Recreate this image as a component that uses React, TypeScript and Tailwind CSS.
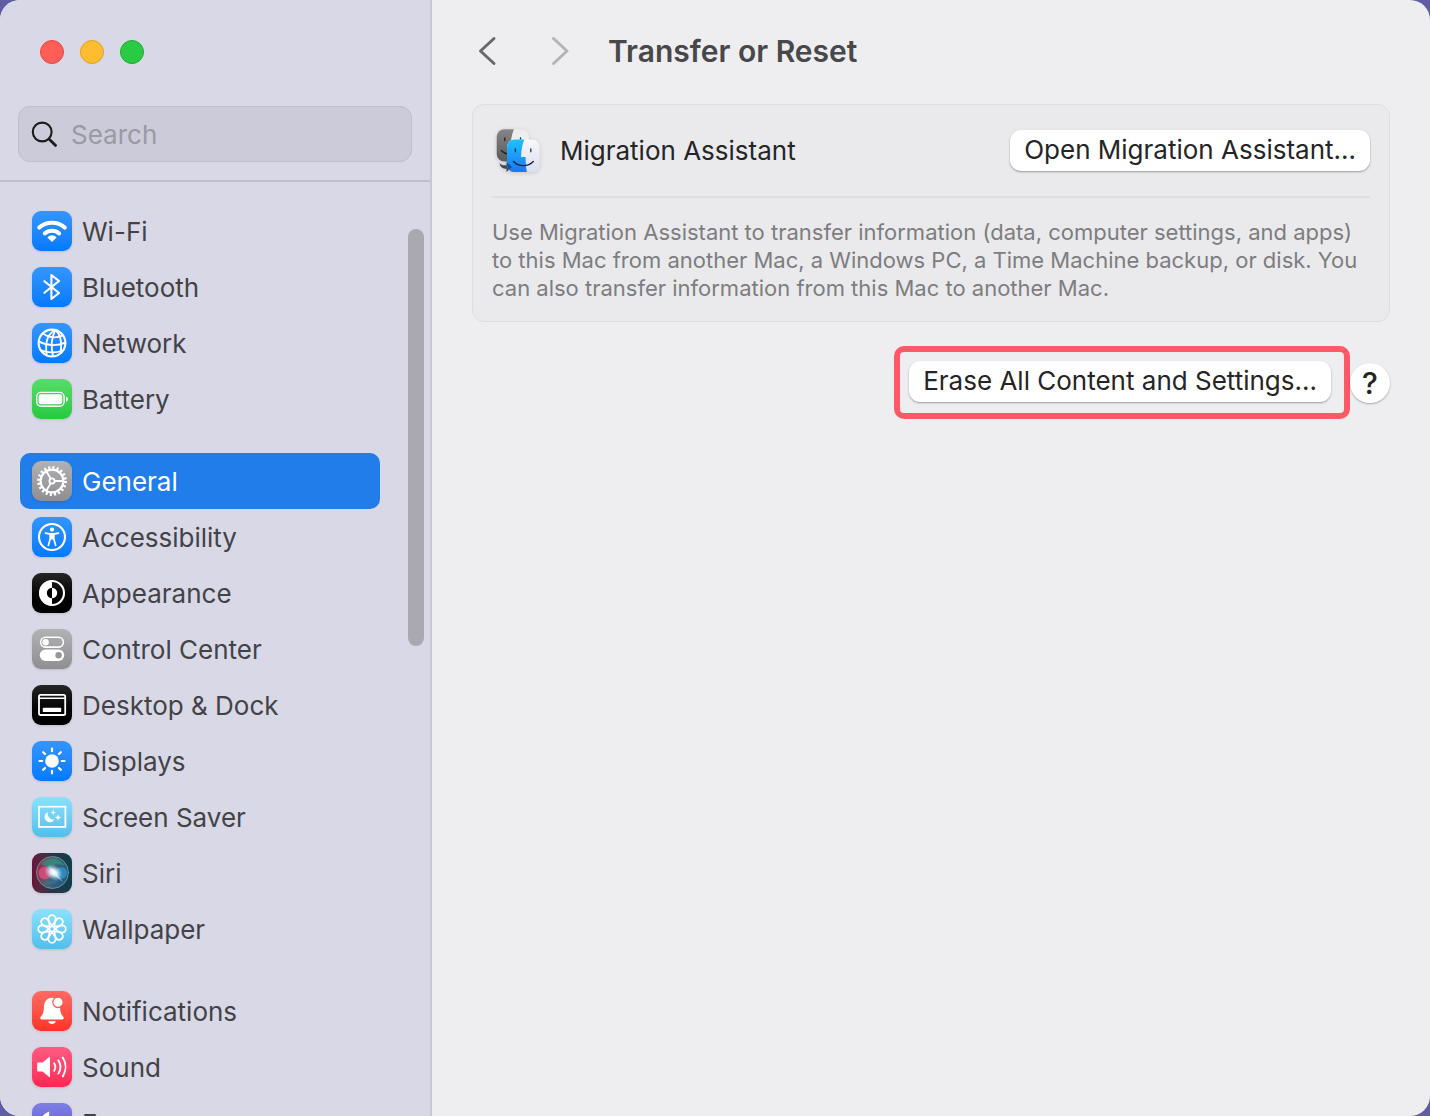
import React, { useState } from 'react';

interface SettingsItem {
  name: string;
  tile: string;
  glyph: React.ReactNode;
}

const BLUE = 'bg-linear-to-b from-[#3395ff] to-[#007aff]';
const SKY = 'bg-linear-to-b from-[#8ae2fb] to-[#52bdee]';
const GRAY = 'bg-linear-to-b from-[#b2b2b4] to-[#8e8e93]';
const BLACK = 'bg-linear-to-b from-[#262626] to-[#000000]';

const RAYS = [0, 45, 90, 135, 180, 225, 270, 315];

const WifiGlyph = () => (
  <>
    <path d="M7.2 16.6a19 19 0 0 1 25.600 0" strokeWidth="4" />
    <path d="M12.8 22.400a10.800 10.800 0 0 1 14.400 0" strokeWidth="4" />
    <path d="M15.4 26.400a6.200 6.200 0 0 1 9.200 0L20 31z" fill="white" stroke="none" />
  </>
);

const BluetoothGlyph = () => (
  <path d="M12.4 14.2 27 26l-7.6 6V8l7.6 6-14.6 11.8" strokeWidth="2.1" />
);

const NetworkGlyph = () => (
  <g strokeWidth="1.8">
    <circle cx="20" cy="20" r="13.4" strokeWidth="2.1" />
    <path d="M23.4 7C17 10 12.5 18 14.8 32.4" />
    <path d="M23.4 7C20 13 18.8 23 21 33.2" />
    <path d="M23.4 7C28.5 11 30 20 28.6 30" />
    <path d="M10.8 10.4C16 14.8 24 15.6 31 12.4" />
    <path d="M6.8 18.4C14 22.6 25 23.4 33.2 19.6" />
    <path d="M9.2 27.4C15 30 24 30.4 31 27.2" />
  </g>
);

const BatteryGlyph = () => (
  <>
    <rect x="4.7" y="13.4" width="27.4" height="13.8" rx="4.4" strokeWidth="1.4" />
    <rect x="6.6" y="15.3" width="23.6" height="10" rx="2.4" fill="white" stroke="none" />
    <path d="M34 17.6q2 .8 2 2.6t-2 2.6z" fill="white" stroke="none" />
  </>
);

const GearGlyph = () => (
  <>
    <circle cx="20" cy="20" r="13.4" strokeWidth="3" strokeDasharray="2.1 2.11" strokeLinecap="butt" />
    <circle cx="20" cy="20" r="11.4" strokeWidth="2.2" />
    <circle cx="20" cy="20" r="2.6" strokeWidth="1.8" />
    <path d="M23 20h8M18.5 17.4l-4.2-7.2M18.5 22.6l-4.2 7.2" strokeWidth="1.8" />
  </>
);

const AccessibilityGlyph = () => (
  <>
    <circle cx="20" cy="20" r="13" strokeWidth="2.1" />
    <circle cx="20" cy="12.6" r="2.1" fill="white" stroke="none" />
    <path d="M13.6 16.2l5 1h2.8l5-1" strokeWidth="1.7" />
    <path d="M18.2 16.8h3.6v5l1.8 6.6M18.2 16.8v5l-1.8 6.6" strokeWidth="1.7" />
    <path d="M18.2 17h3.6v5.4h-3.6z" fill="white" stroke="none" />
  </>
);

const AppearanceGlyph = () => (
  <>
    <circle cx="20" cy="20" r="12" strokeWidth="2.1" />
    <path d="M20 7.5a12.5 12.5 0 0 0 0 25z" fill="white" stroke="none" />
    <path d="M20 14.8a5.2 5.2 0 0 0 0 10.4z" fill="black" stroke="none" />
    <path d="M20 14.8a5.2 5.2 0 0 1 0 10.4z" fill="white" stroke="none" />
  </>
);

const ControlCenterGlyph = () => (
  <>
    <rect x="8.6" y="8.3" width="22.8" height="9.8" rx="4.9" strokeWidth="1.6" />
    <circle cx="13.6" cy="13.2" r="3.2" fill="white" stroke="none" />
    <rect x="7.8" y="20.4" width="24.4" height="11.6" rx="5.8" fill="white" stroke="none" />
    <circle cx="26.6" cy="26.2" r="3.2" fill="#97979b" stroke="none" />
  </>
);

const DesktopGlyph = () => (
  <>
    <rect x="7" y="9.8" width="26.2" height="20.2" rx="1.6" strokeWidth="1.8" />
    <path d="M7 13.2h26" strokeWidth="1.5" />
    <rect x="10.8" y="22.8" width="18.4" height="4.2" rx="0.6" fill="white" stroke="none" />
  </>
);

const DisplaysGlyph = () => (
  <>
    <circle cx="20" cy="20" r="6.8" fill="white" stroke="none" />
    {RAYS.map((angle) => (
      <path key={angle} d="M20 10.200V7.500" strokeWidth="2.2" transform={`rotate(${angle} 20 20)`} />
    ))}
  </>
);

const ScreenSaverGlyph = () => (
  <>
    <rect x="7" y="9.7" width="26.4" height="20.2" strokeWidth="1.8" strokeLinejoin="miter" />
    <g fill="white" stroke="none">
      <path d="M16 15.2a5.2 5.2 0 1 0 6.4 7.2 5.6 5.6 0 0 1-6.4-7.2z" />
      <path d="M21.3 12.800l.8 2 2 .7-2 .7-.8 2-.8-2-2-.7 2-.7z" />
      <path d="M26 17.2l.9 2.400 2.400.9-2.400.9-.9 2.400-.9-2.400-2.400-.9 2.400-.9z" />
    </g>
  </>
);

const SiriGlyph = () => (
  <g stroke="none">
    <defs>
      <radialGradient id="siri-core">
        <stop offset="0" stopColor="#ffffff" />
        <stop offset="0.35" stopColor="#e4f6ff" stopOpacity="0.9" />
        <stop offset="1" stopColor="#9fd8f8" stopOpacity="0" />
      </radialGradient>
      <linearGradient id="siri-orb" x1="0" y1="0.3" x2="1" y2="0.7">
        <stop offset="0" stopColor="#c02a5c" />
        <stop offset="0.45" stopColor="#5e7f8e" />
        <stop offset="1" stopColor="#1c6fae" />
      </linearGradient>
    </defs>
    <circle cx="20.5" cy="19.5" r="16" fill="url(#siri-orb)" opacity="0.6" />
    <path d="M9 11C15 3 27 4 33 13c-7-3-13-2-15 4-3-3-6-5-9-6z" fill="#25a184" opacity="0.6" />
    <circle cx="13" cy="20" r="6.5" fill="#ee4c7c" opacity="0.75" />
    <circle cx="29" cy="20" r="6" fill="#33a7e6" opacity="0.6" />
    <path d="M10 30c8-1 14-4 21-9-2 8-13 14-21 9z" fill="#2c7f9d" opacity="0.5" />
    <circle cx="20.5" cy="19.5" r="16" fill="none" stroke="#7fa9b4" strokeWidth="0.9" opacity="0.8" />
    <ellipse cx="21.5" cy="19.5" rx="10" ry="7.5" fill="url(#siri-core)" transform="rotate(30 21.5 19.5)" />
    <path d="m16 13 7 4.500L31 29l-9-6.500z" fill="white" opacity="0.4" />
  </g>
);

const WallpaperGlyph = () => (
  <>
    {RAYS.map((angle) => (
      <path
        key={angle}
        d="M20 16.8C18.4 14.4 16.3 12.8 16.3 9.9a3.7 3.7 0 0 1 7.4 0C23.7 12.8 21.6 14.4 20 16.8z"
        strokeWidth="1.8"
        transform={`rotate(${angle} 20 20)`}
      />
    ))}
    <circle cx="20" cy="20" r="2.5" strokeWidth="1.5" />
  </>
);

const NotificationsGlyph = () => (
  <>
    <path
      d="M20 6.800c-5 .2-7.700 3.600-8 8.700-.3 5.300-.8 7.200-2.600 9.200C7.800 26.300 7.800 28.500 9.800 28.500h20.400c2 0 2-2.200.4-3.800-1.800-2-2.300-3.900-2.600-9.200C27.700 10.400 25 7 20 6.800z"
      fill="white"
      stroke="none"
    />
    <path d="M16.2 30.3h7.6a3.9 3.4 0 0 1-7.6 0z" fill="white" stroke="none" />
    <circle cx="26" cy="11.3" r="5.200" fill="white" stroke="#ff5a52" strokeWidth="1.300" />
  </>
);

const SoundGlyph = () => (
  <>
    <path d="M6 15.5h4.6L17.2 10q.8-.5.8.6v18.800q0 1.100-.8.600L10.600 24.500H6q-.8 0-.8-.8v-7.400q0-.8.8-.8z" fill="white" stroke="none" />
    <path d="M22.200 16.2a7.500 7.500 0 0 1 0 7.600M26.400 13.400a12.500 12.500 0 0 1 0 13.200M30.800 10.600a17.500 17.500 0 0 1 0 18.800" strokeWidth="1.900" />
  </>
);

const FocusGlyph = () => (
  <path d="M17.5 8.5a12.2 12.2 0 1 0 14.5 16A13 13 0 0 1 17.5 8.5z" fill="white" stroke="none" />
);

const groups: SettingsItem[][] = [
  [
    { name: 'Wi-Fi', tile: BLUE, glyph: <WifiGlyph /> },
    { name: 'Bluetooth', tile: BLUE, glyph: <BluetoothGlyph /> },
    { name: 'Network', tile: BLUE, glyph: <NetworkGlyph /> },
    { name: 'Battery', tile: 'bg-linear-to-b from-[#56dd69] to-[#24ca3e]', glyph: <BatteryGlyph /> },
  ],
  [
    { name: 'General', tile: GRAY, glyph: <GearGlyph /> },
    { name: 'Accessibility', tile: BLUE, glyph: <AccessibilityGlyph /> },
    { name: 'Appearance', tile: BLACK, glyph: <AppearanceGlyph /> },
    { name: 'Control Center', tile: GRAY, glyph: <ControlCenterGlyph /> },
    { name: 'Desktop & Dock', tile: BLACK, glyph: <DesktopGlyph /> },
    { name: 'Displays', tile: BLUE, glyph: <DisplaysGlyph /> },
    { name: 'Screen Saver', tile: SKY, glyph: <ScreenSaverGlyph /> },
    { name: 'Siri', tile: 'bg-linear-to-r from-[#6a1237] via-[#263548] to-[#0c3f48]', glyph: <SiriGlyph /> },
    { name: 'Wallpaper', tile: SKY, glyph: <WallpaperGlyph /> },
  ],
  [
    { name: 'Notifications', tile: 'bg-linear-to-b from-[#ff6a62] to-[#ff3126]', glyph: <NotificationsGlyph /> },
    { name: 'Sound', tile: 'bg-linear-to-b from-[#ff5a82] to-[#ff2452]', glyph: <SoundGlyph /> },
    { name: 'Focus', tile: 'bg-linear-to-b from-[#7f7ee4] to-[#5856d6]', glyph: <FocusGlyph /> },
  ],
];

const MigrationIcon = () => (
  <svg viewBox="0 0 52 52" className="size-[52px] shrink-0 drop-shadow-sm" aria-hidden="true">
    <defs>
      <linearGradient id="finder-blue" x1="0" y1="0" x2="0" y2="1">
        <stop offset="0" stopColor="#1fc3fb" />
        <stop offset="1" stopColor="#1a74f2" />
      </linearGradient>
      <linearGradient id="finder-light" x1="0" y1="0" x2="0" y2="1">
        <stop offset="0" stopColor="#f8f8fa" />
        <stop offset="1" stopColor="#d9deee" />
      </linearGradient>
      <linearGradient id="finder-gray" x1="0" y1="0" x2="0" y2="1">
        <stop offset="0" stopColor="#868688" />
        <stop offset="1" stopColor="#58585b" />
      </linearGradient>
      <clipPath id="back-tile">
        <rect x="4.7" y="4.2" width="32.3" height="32.3" rx="7.5" />
      </clipPath>
      <clipPath id="front-tile">
        <rect x="15" y="14.5" width="32.6" height="32.6" rx="7.5" />
      </clipPath>
    </defs>
    <g clipPath="url(#back-tile)">
      <rect x="4" y="4" width="34" height="34" fill="#eeeeef" />
      <path d="M4 4h18c-2 5-3 10-3.500 15H23v19H4z" fill="url(#finder-gray)" />
      <path d="M12.800 13v2.600M28.500 13v2.600" stroke="#222" strokeWidth="1.3" strokeLinecap="round" />
      <path d="M9.500 25.500q3 3.500 9 4" fill="none" stroke="#222" strokeWidth="1.3" strokeLinecap="round" />
    </g>
    <path d="M7.500 38c1.500 2 3.500 2.500 7 2.300V37l5.500 5-5.500 5v-3.200c-4 0-6.600-2-7-5.800z" fill="#3d4b58" />
    <g clipPath="url(#front-tile)">
      <rect x="15" y="14" width="33" height="34" fill="url(#finder-light)" />
      <path d="M15 14h17.500c-2 5-3.200 10.500-3.500 18h4.600c0 5 .4 10 1.400 16H15z" fill="url(#finder-blue)" />
      <path d="M23.400 24v2.800M38.800 24v2.800" stroke="#17324f" strokeWidth="1.3" strokeLinecap="round" />
      <path d="M21.500 36.500c5 5.500 14.500 5.500 19.800 0" fill="none" stroke="#17283f" strokeWidth="1.4" strokeLinecap="round" />
      <path d="M15 37.500 20 42l-5 4.500z" fill="#1f4f86" />
    </g>
  </svg>
);

interface SidebarRowProps {
  item: SettingsItem;
  selected: boolean;
  onSelect: () => void;
}

const SidebarRow: React.FC<SidebarRowProps> = ({ item, selected, onSelect }) => (
  <li>
    <button
      type="button"
      onClick={onSelect}
      aria-current={selected ? 'page' : undefined}
      className={`flex h-14 w-full items-center gap-2.5 rounded-[10px] px-3 text-left text-[26px] ${
        selected ? 'bg-[#217dea] text-white' : 'text-[#434347]'
      }`}
    >
      <span className={`size-10 shrink-0 overflow-hidden rounded-[9px] shadow-sm ${item.tile}`}>
        <svg viewBox="0 0 40 40" className="size-10" fill="none" stroke="white" strokeLinecap="round" strokeLinejoin="round" aria-hidden="true">
          {item.glyph}
        </svg>
      </span>
      <span>{item.name}</span>
    </button>
  </li>
);

const Sidebar = () => {
  const [selected, setSelected] = useState('General');
  const [query, setQuery] = useState('');

  return (
    <aside className="flex w-[432px] shrink-0 flex-col border-r-2 border-[#c9c8d4] bg-[#d9d8e6]">
      <div className="flex gap-4 px-10 pt-10">
        <button type="button" aria-label="Close" className="size-6 rounded-full border border-[#e9463f] bg-[#ff5d57]" />
        <button type="button" aria-label="Minimize" className="size-6 rounded-full border border-[#e0a02c] bg-[#febc2e]" />
        <button type="button" aria-label="Zoom" className="size-6 rounded-full border border-[#1fa832] bg-[#28cb41]" />
      </div>
      <div className="border-b-2 border-[#bfbecd] px-[18px] pt-[42px] pb-[18px]">
        <label className="flex h-14 items-center gap-3 rounded-[12px] border border-[#bfbecb] bg-[#cccbd9] px-3">
          <svg viewBox="0 0 28 28" className="size-7 shrink-0" fill="none" stroke="#1c1c1e" strokeLinecap="round" aria-hidden="true">
            <circle cx="11.2" cy="12" r="9.4" strokeWidth="2.1" />
            <path d="m18 19 6.600 6.400" strokeWidth="2.8" />
          </svg>
          <input
            type="text"
            value={query}
            onChange={(e) => setQuery(e.target.value)}
            placeholder="Search"
            aria-label="Search"
            className="w-full bg-transparent text-[26px] outline-none placeholder:text-[#9a99a4]"
          />
        </label>
      </div>
      <nav className="relative min-h-0 flex-1 overflow-hidden pt-[21px] pr-[50px] pl-5">
        <div className="flex flex-col gap-[26px]">
          {groups.map((group, i) => (
            <ul key={i}>
              {group.map((item) => (
                <SidebarRow
                  key={item.name}
                  item={item}
                  selected={item.name === selected}
                  onSelect={() => setSelected(item.name)}
                />
              ))}
            </ul>
          ))}
        </div>
        <div className="absolute top-[47px] right-1.5 h-[417px] w-4 rounded-full bg-[#aaa9b3]" />
      </nav>
    </aside>
  );
};

const pushButton =
  'h-[41px] rounded-[11px] bg-white px-[14px] pb-[2px] text-[26px] leading-none whitespace-nowrap text-[#252527] shadow-[0_1px_2px_rgba(0,0,0,0.35)]';

export default function App() {
  return (
    <div className="h-screen bg-[#5f5da3] font-['Inter',sans-serif]">
      <div className="flex h-full overflow-hidden rounded-[20px] bg-[#eeeef0]">
        <Sidebar />
        <main className="min-w-0 flex-1 px-10 pt-[30px]">
          <header className="flex h-[42px] items-center">
            <button type="button" aria-label="Back" className="ml-1">
              <svg viewBox="0 0 24 32" className="h-8 w-6" fill="none" stroke="#69696c" strokeWidth="3" strokeLinecap="round" strokeLinejoin="round">
                <path d="M18 3.500 4.500 16 18 28.500" />
              </svg>
            </button>
            <button type="button" aria-label="Forward" className="ml-12">
              <svg viewBox="0 0 24 32" className="h-8 w-6" fill="none" stroke="#b4b4b6" strokeWidth="3" strokeLinecap="round" strokeLinejoin="round">
                <path d="M5.500 3.500 19 16 5.500 28.500" />
              </svg>
            </button>
            <h1 className="ml-9 text-[30px] font-semibold text-[#48484a]">Transfer or Reset</h1>
          </header>

          <section className="mt-8 rounded-[12px] border border-[#dededf] bg-[#eaeaec] px-[19px] pb-[19px]">
            <div className="flex h-[93px] items-center border-b-2 border-[#dedee0]">
              <MigrationIcon />
              <h2 className="ml-4 flex-1 text-[26px] text-[#252527]">Migration Assistant</h2>
              <button type="button" className={pushButton}>Open Migration Assistant…</button>
            </div>
            <p className="mt-5 text-[22px] leading-7 text-[#7d7d80]">
              Use Migration Assistant to transfer information (data, computer settings, and apps) to this Mac from
              another Mac, a Windows PC, a Time Machine backup, or disk. You can also transfer information from this
              Mac to another Mac.
            </p>
          </section>

          <div className="mt-6 flex items-center justify-end">
            <div className="rounded-[10px] border-6 border-[#ff5967] pt-[9px] pr-[13px] pb-[11px] pl-[9px]">
              <button type="button" className={`block ${pushButton}`}>Erase All Content and Settings…</button>
            </div>
            <button
              type="button"
              aria-label="Help"
              className="size-10 rounded-full bg-white text-[30px] leading-none font-medium text-[#252527] shadow-[0_1px_2px_rgba(0,0,0,0.3)]"
            >
              ?
            </button>
          </div>
        </main>
      </div>
    </div>
  );
}
